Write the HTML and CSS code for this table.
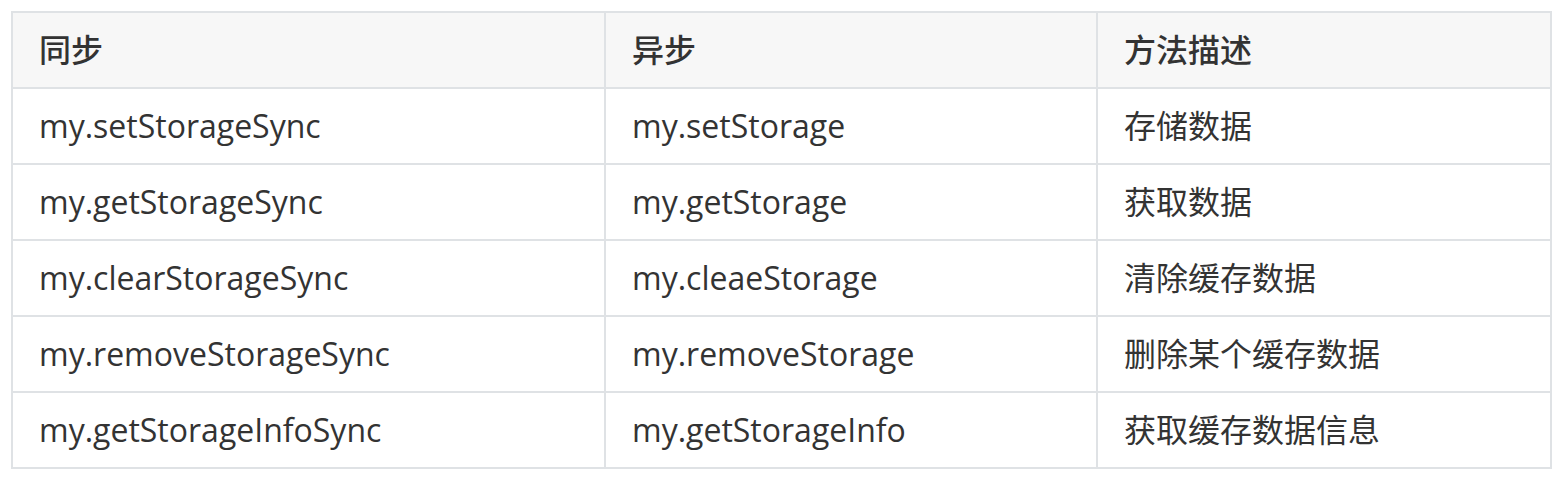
FILE: index.html
```html
<!DOCTYPE html>
<html lang="zh">
<head>
<meta charset="utf-8">
<link rel="stylesheet" href="styles.css">
</head>
<body>
<table class="api">
  <colgroup>
    <col class="c1"><col class="c2"><col class="c3">
  </colgroup>
  <thead>
    <tr><th>同步</th><th>异步</th><th>方法描述</th></tr>
  </thead>
  <tbody>
    <tr><td>my.setStorageSync</td><td>my.setStorage</td><td>存储数据</td></tr>
    <tr><td>my.getStorageSync</td><td>my.getStorage</td><td>获取数据</td></tr>
    <tr><td>my.clearStorageSync</td><td>my.cleaeStorage</td><td>清除缓存数据</td></tr>
    <tr><td>my.removeStorageSync</td><td>my.removeStorage</td><td>删除某个缓存数据</td></tr>
    <tr><td>my.getStorageInfoSync</td><td>my.getStorageInfo</td><td>获取缓存数据信息</td></tr>
  </tbody>
</table>
</body>
</html>
```

FILE: styles.css
```css
html, body {
  margin: 0;
  padding: 0;
  background: #fff;
}
body {
  padding: 11px 10px 0 11px;
  font-family: "Open Sans", "Noto Sans CJK SC", sans-serif;
  color: #333;
}
.api {
  border-collapse: collapse;
  table-layout: fixed;
  width: 1539px;
  font-size: 32px;
}
.c1 { width: 593px; }
.c2 { width: 492px; }
.c3 { width: 454px; }
.api th, .api td {
  border: 2px solid #dfe2e5;
  padding: 12px 26px;
  line-height: 50px;
  text-align: left;
  white-space: nowrap;
}
.api th {
  background: #f7f7f7;
  font-weight: 500;
}
```
